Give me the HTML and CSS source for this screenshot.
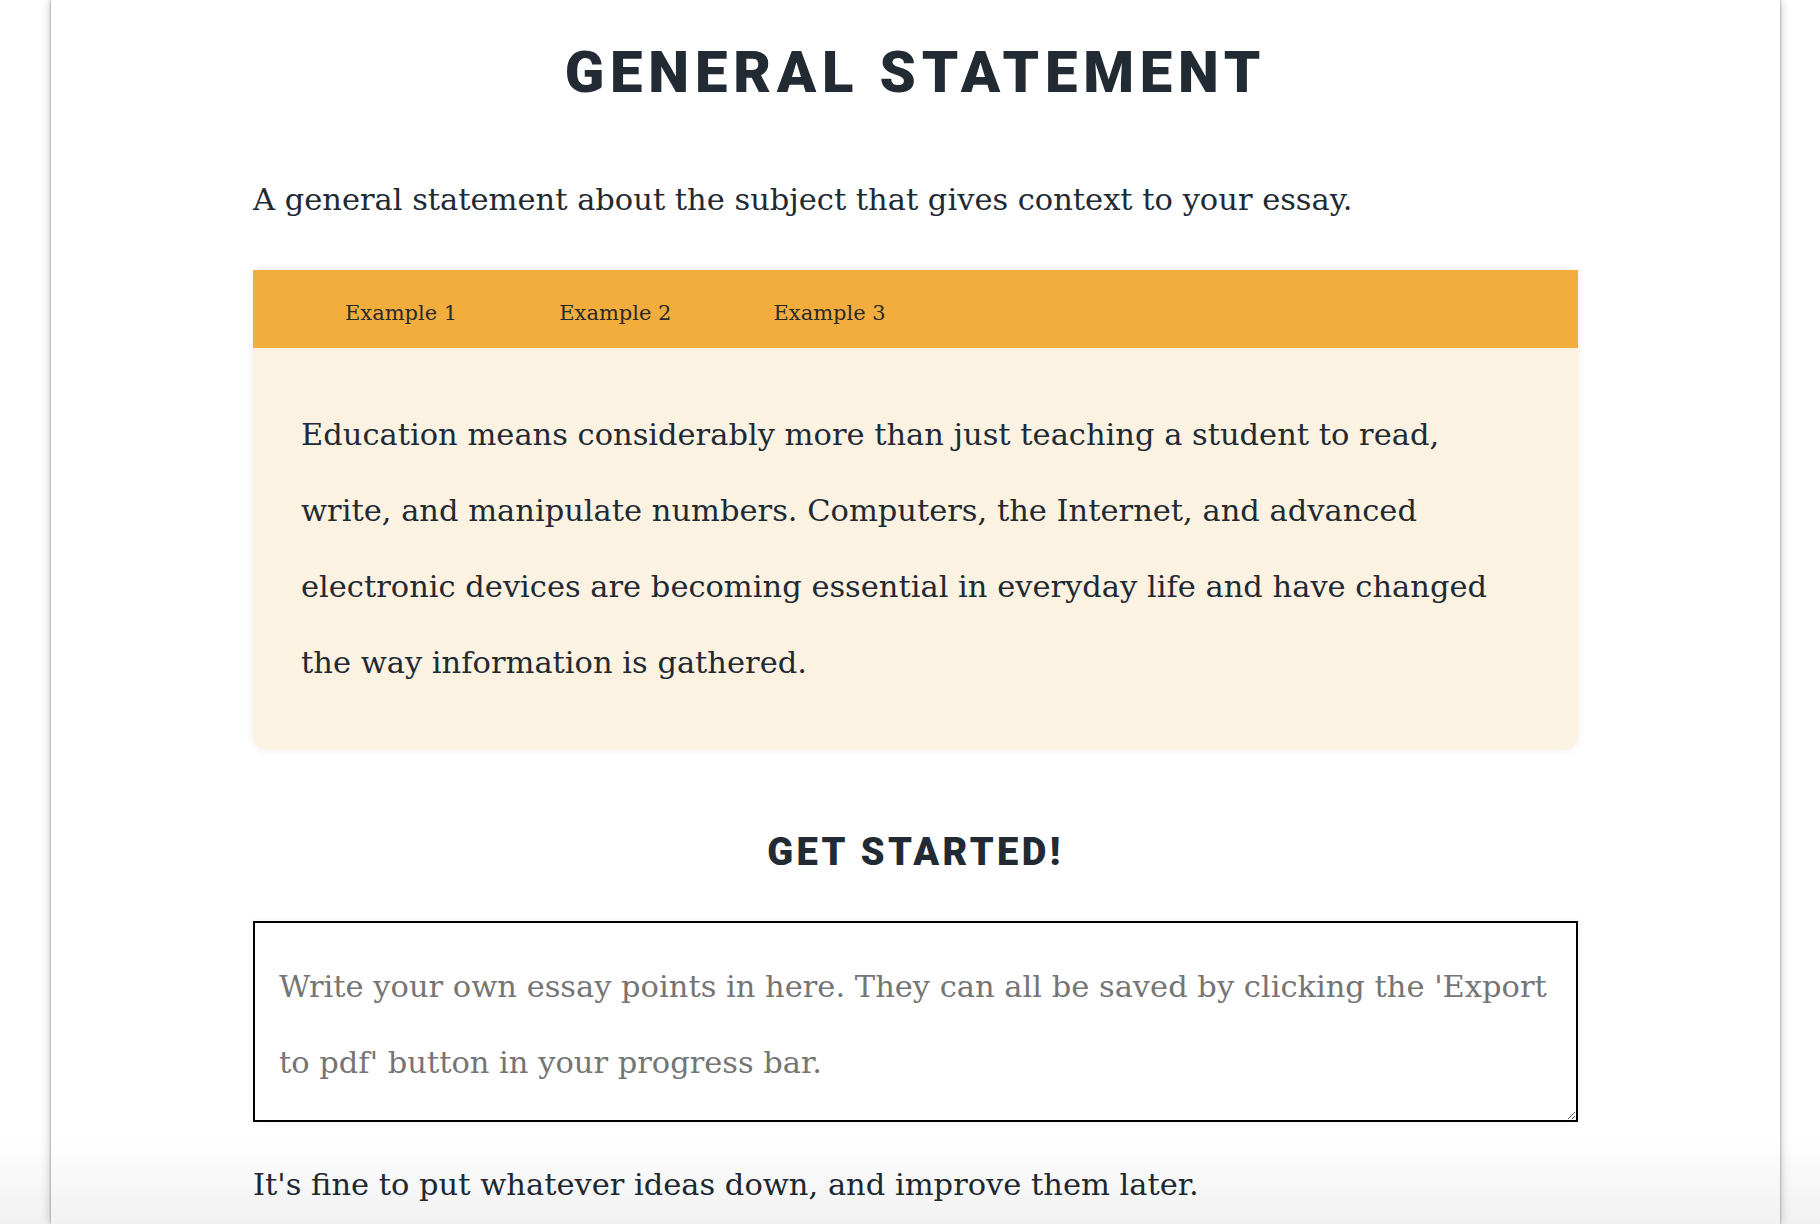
FILE: index.html
```html
<!DOCTYPE html>
<html lang="en">
<head>
<meta charset="utf-8">
<title>General statement</title>
<link rel="stylesheet" href="styles.css">
</head>
<body>
<main class="panel">
  <div class="content">
    <h1 class="title">GENERAL STATEMENT</h1>
    <p class="lead">A general statement about the subject that gives context to your essay.</p>

    <section class="examples">
      <nav class="tabs">
        <span class="tab">Example 1</span>
        <span class="tab">Example 2</span>
        <span class="tab">Example 3</span>
      </nav>
      <div class="example-body">
        <p>Education means considerably more than just teaching a student to read, write, and manipulate numbers. Computers, the Internet, and advanced electronic devices are becoming essential in everyday life and have changed the way information is gathered.</p>
      </div>
    </section>

    <h2 class="subtitle">GET STARTED!</h2>
    <textarea class="notes" placeholder="Write your own essay points in here. They can all be saved by clicking the 'Export to pdf' button in your progress bar."></textarea>
    <p class="hint">It's fine to put whatever ideas down, and improve them later.</p>
  </div>
</main>
<div class="bottom-fade"></div>
</body>
</html>
```

FILE: styles.css
```css
html, body {
  margin: 0;
  padding: 0;
  background: #ffffff;
}

body {
  font-family: "DejaVu Serif", "Liberation Serif", serif;
  color: #212a33;
  overflow: hidden;
  height: 1224px;
}

.panel {
  margin-left: 51px;
  width: 1729px;
  min-height: 1224px;
  background: #ffffff;
  box-shadow: 0 0 2px rgba(0, 0, 0, 0.45), 0 0 10px rgba(0, 0, 0, 0.25);
  padding-top: 43px;
  box-sizing: border-box;
}

.content {
  width: 1325px;
  margin: 0 auto;
}

.title {
  margin: 0;
  font-family: "Roboto", "Lato", sans-serif;
  font-weight: 900;
  font-size: 58px;
  line-height: 58px;
  letter-spacing: 0.1em;
  text-align: center;
  color: #222a33;
}

.lead {
  margin: 79px 0 0;
  font-size: 30.5px;
  line-height: 40px;
}

.examples {
  margin-top: 50px;
  border-radius: 0 0 14px 14px;
  box-shadow: 0 0 10px rgba(0, 0, 0, 0.07);
  overflow: hidden;
}

.tabs {
  display: flex;
  background: #f2ad3d;
  height: 78px;
  box-sizing: border-box;
  padding: 8px 0 0 41px;
}

.tab {
  padding: 0 51px;
  font-size: 21px;
  line-height: 70px;
  color: #2a2a2a;
}

.example-body {
  background: #fcf2e2;
  padding: 49px 76px 49px 48px;
}

.example-body p {
  margin: 0;
  font-size: 30.5px;
  line-height: 76px;
}

.subtitle {
  margin: 83px 0 0;
  font-family: "Roboto", "Lato", sans-serif;
  font-weight: 900;
  font-size: 38px;
  line-height: 38px;
  letter-spacing: 0.09em;
  text-align: center;
  color: #222a33;
}

.notes {
  display: block;
  width: 100%;
  height: 201px;
  box-sizing: border-box;
  margin-top: 50px;
  border: 2px solid #000000;
  border-radius: 0;
  padding: 26px 20px 18px 24px;
  font-family: "DejaVu Serif", "Liberation Serif", serif;
  font-size: 30.5px;
  line-height: 76px;
  color: #212a33;
  background: #ffffff;
  box-shadow: 0 0 8px rgba(0, 0, 0, 0.06);
  resize: vertical;
}

.notes::placeholder {
  color: #757575;
}

.hint {
  margin: 43px 0 0;
  font-size: 30.5px;
  line-height: 40px;
}

.bottom-fade {
  position: fixed;
  left: 0;
  right: 0;
  bottom: 0;
  height: 90px;
  background: linear-gradient(to bottom, rgba(0, 0, 0, 0), rgba(0, 0, 0, 0.055));
  pointer-events: none;
}
```
